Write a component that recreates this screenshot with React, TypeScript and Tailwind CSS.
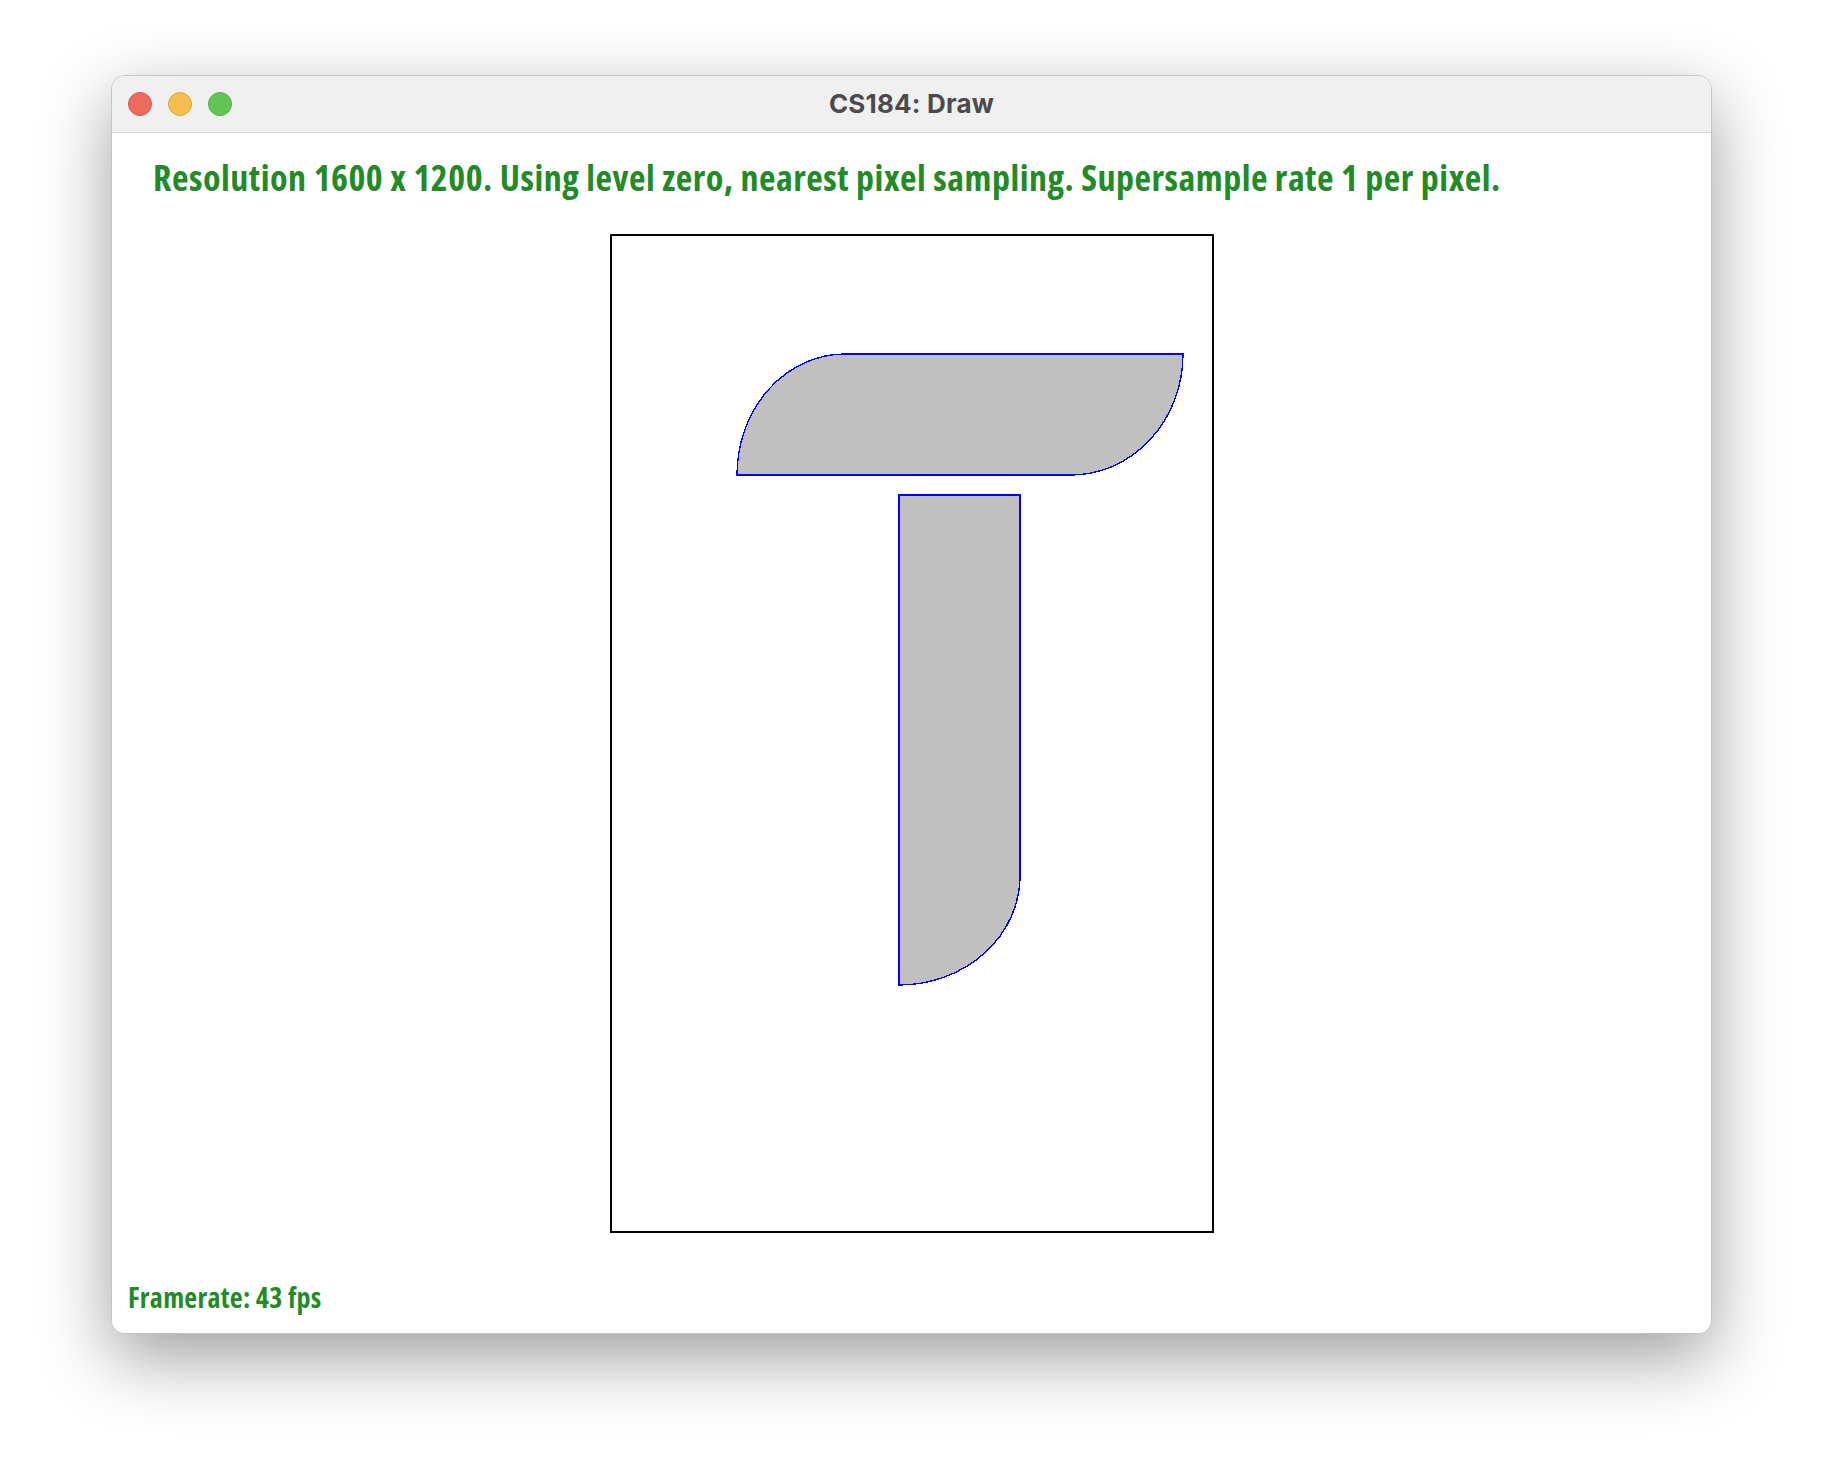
import React from "react";

export default function App() {
  return (
    <div className="min-h-[1480px] w-[1824px] bg-white pl-[111px] pt-[75px]">
      <div className="flex w-[1601px] flex-col overflow-hidden rounded-[14px] border border-[#c4c4c4] bg-white shadow-[0_24px_70px_rgba(0,0,0,0.38)]">
        {/* Title bar */}
        <div className="relative flex h-[57px] items-center justify-center border-b border-[#d6d6d6] bg-[#f0f0f0] pb-[2px]">
          <div className="absolute left-[16px] top-[16px] flex gap-[16px]">
            <span className="block h-[24px] w-[24px] rounded-full border border-[#d9564b] bg-[#ee6a5f]" />
            <span className="block h-[24px] w-[24px] rounded-full border border-[#dea53d] bg-[#f5be4f]" />
            <span className="block h-[24px] w-[24px] rounded-full border border-[#55ad48] bg-[#62c554]" />
          </div>
          <span className="font-['Inter',sans-serif] text-[26px] font-bold tracking-[0.2px] text-[#4b4b4b]">
            CS184: Draw
          </span>
        </div>
        {/* Content */}
        <div className="relative flex h-[1200px] items-center justify-center bg-white">
          <svg width="604" height="999" viewBox="0 0 604 999" shapeRendering="crispEdges">
            <rect x="1" y="1" width="602" height="997" fill="white" stroke="black" strokeWidth="2" />
            <path
              d="M 127 241 A 108 121 0 0 1 235 120 L 573 120 A 112 121 0 0 1 461 241 Z"
              fill="#c0c0c0"
              stroke="#0000ff"
              strokeWidth="1.4"
            />
            <path
              d="M 289 261 L 410 261 L 410 642 A 121 109 0 0 1 289 751 Z"
              fill="#c0c0c0"
              stroke="#0000ff"
              strokeWidth="1.4"
            />
          </svg>
          <div className="absolute left-[41px] top-[15px] font-['Open_Sans',sans-serif] text-[36px] font-bold leading-[60px] tracking-[0.52px] text-[#228a26] [font-stretch:75%]">
            Resolution 1600 x 1200. Using level zero, nearest pixel sampling. Supersample rate 1 per pixel.
          </div>
          <div className="absolute bottom-[16px] left-[16px] font-['Open_Sans',sans-serif] text-[28px] font-bold leading-[40px] tracking-[0.28px] text-[#228a26] [font-stretch:75%]">
            Framerate: 43 fps
          </div>
        </div>
      </div>
    </div>
  );
}
